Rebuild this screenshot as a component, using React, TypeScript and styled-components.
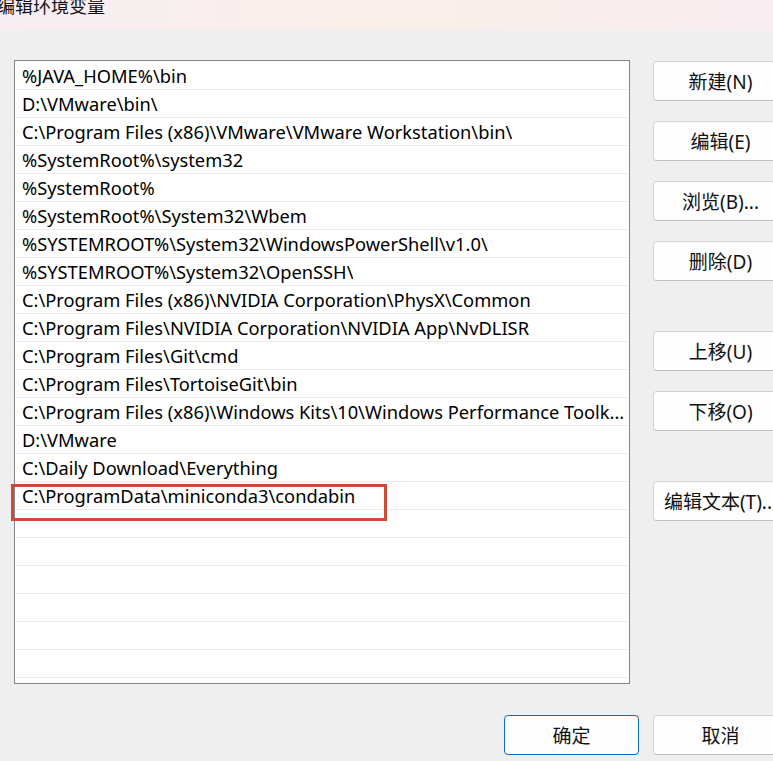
import React from "react";
import styled, { createGlobalStyle } from "styled-components";

const Global = createGlobalStyle`
  html, body { margin: 0; padding: 0; background: #efefef; }
  body { overflow: hidden; }
`;

const FONT = `"Noto Sans", "Noto Sans CJK SC", sans-serif`;

const Dialog = styled.div`
  width: 820px;
  height: 761px;
  background: #efefef;
  font-family: ${FONT};
  color: #000;
  display: flex;
  flex-direction: column;
`;

const TitleBar = styled.div`
  height: 30px;
  flex: none;
  width: 773px;
  background: linear-gradient(90deg, #f6eef3 0%, #faefe9 50%, #f8ecf0 100%);
  overflow: hidden;
`;

const Title = styled.div`
  font-size: 18px;
  line-height: 18px;
  margin-top: -3px;
  margin-left: -3px;
  color: #111;
`;

const Body = styled.div`
  display: flex;
  align-items: flex-start;
  gap: 23px;
  padding: 30px 0 0 14px;
`;

const ListBox = styled.div`
  position: relative;
  width: 612px;
  height: 621px;
  border: 1px solid #80868d;
  background: #fff;
  padding: 1px 1px 0 1px;
  box-sizing: content-box;
  flex: none;
`;

const ListClip = styled.div`
  width: 100%;
  height: 100%;
  overflow: hidden;
`;

const Row = styled.div`
  height: 27px;
  border-bottom: 1px solid #ececec;
  padding: 0 0 0 6px;
  display: flex;
  align-items: center;
  font-size: 18.3px;
  white-space: nowrap;
  overflow: hidden;
  box-sizing: content-box;
`;

const RowText = styled.span`
  overflow: hidden;
  text-overflow: ellipsis;
  white-space: nowrap;
`;

const Highlight = styled.div`
  position: absolute;
  left: -4px;
  top: 423px;
  width: 370px;
  height: 31px;
  border: 3px solid #cf4a35;
  pointer-events: none;
`;

const ButtonColumn = styled.div`
  display: flex;
  flex-direction: column;
  gap: 20px;
  padding-top: 1px;
`;

const Button = styled.button<{ $gapBefore?: number; $primary?: boolean }>`
  width: 135px;
  height: 40px;
  margin-top: ${(p) => p.$gapBefore ?? 0}px;
  background: #fdfdfd;
  border: 1px solid ${(p) => (p.$primary ? "#0a6cc4" : "#d3d3d3")};
  border-bottom-color: ${(p) => (p.$primary ? "#0a6cc4" : "#c2c2c2")};
  border-radius: 4px;
  font-family: ${FONT};
  font-size: 19px;
  color: #111;
  padding: 0;
  white-space: nowrap;
  display: flex;
  align-items: center;
  justify-content: center;
  flex: none;
`;

const Footer = styled.div`
  display: flex;
  gap: 14px;
  padding: 31px 0 0 504px;
`;

const paths = [
  "%JAVA_HOME%\\bin",
  "D:\\VMware\\bin\\",
  "C:\\Program Files (x86)\\VMware\\VMware Workstation\\bin\\",
  "%SystemRoot%\\system32",
  "%SystemRoot%",
  "%SystemRoot%\\System32\\Wbem",
  "%SYSTEMROOT%\\System32\\WindowsPowerShell\\v1.0\\",
  "%SYSTEMROOT%\\System32\\OpenSSH\\",
  "C:\\Program Files (x86)\\NVIDIA Corporation\\PhysX\\Common",
  "C:\\Program Files\\NVIDIA Corporation\\NVIDIA App\\NvDLISR",
  "C:\\Program Files\\Git\\cmd",
  "C:\\Program Files\\TortoiseGit\\bin",
  "C:\\Program Files (x86)\\Windows Kits\\10\\Windows Performance Toolk...",
  "D:\\VMware",
  "C:\\Daily Download\\Everything",
  "C:\\ProgramData\\miniconda3\\condabin",
];

const rows = [...paths, ...Array(7).fill("")];

export default function App() {
  return (
    <>
      <Global />
      <Dialog>
        <TitleBar>
          <Title>编辑环境变量</Title>
        </TitleBar>
        <Body>
          <ListBox>
            <ListClip>
              {rows.map((r, i) => (
                <Row key={i}>
                  <RowText>{r}</RowText>
                </Row>
              ))}
            </ListClip>
            <Highlight />
          </ListBox>
          <ButtonColumn>
            <Button>新建(N)</Button>
            <Button>编辑(E)</Button>
            <Button>浏览(B)...</Button>
            <Button>删除(D)</Button>
            <Button $gapBefore={30}>上移(U)</Button>
            <Button>下移(O)</Button>
            <Button $gapBefore={30}>编辑文本(T)...</Button>
          </ButtonColumn>
        </Body>
        <Footer>
          <Button $primary>确定</Button>
          <Button>取消</Button>
        </Footer>
      </Dialog>
    </>
  );
}
